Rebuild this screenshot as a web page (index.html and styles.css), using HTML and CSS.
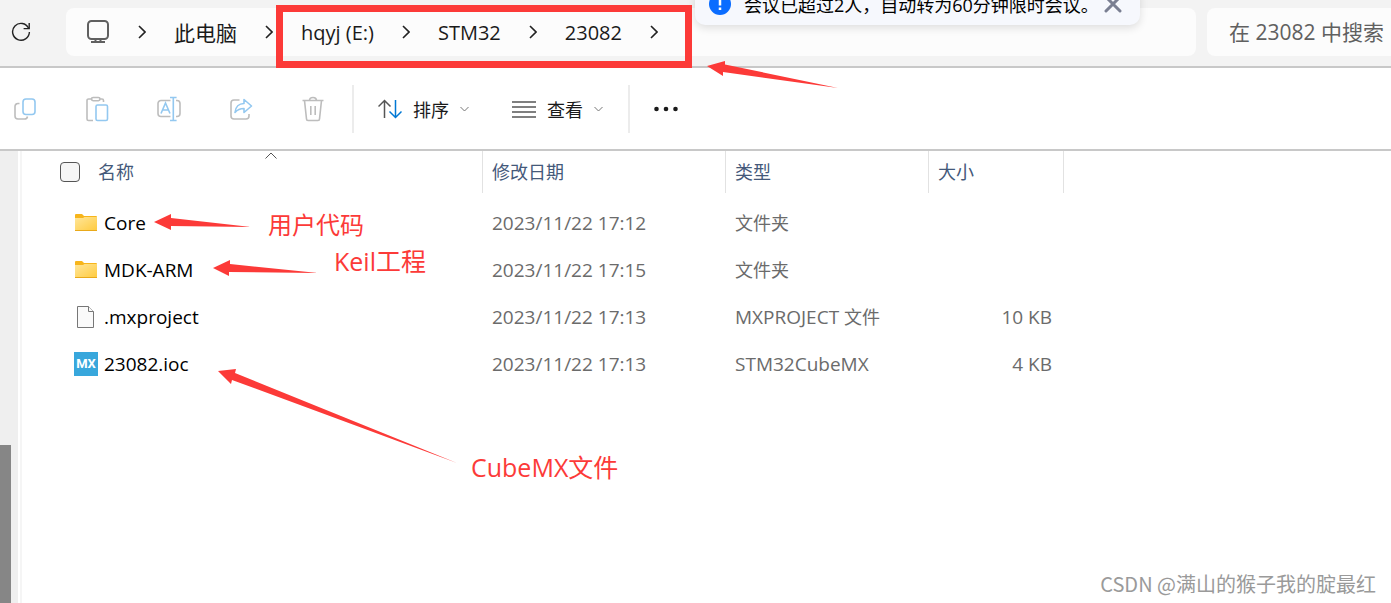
FILE: index.html
```html
<!DOCTYPE html>
<html lang="zh-CN">
<head>
  <meta charset="utf-8">
  <title>23082</title>
  <link rel="stylesheet" href="styles.css">
</head>
<body>
  <div class="topbar">
    <button class="icon-btn refresh" aria-label="刷新">
      <svg width="20" height="20" viewBox="0 0 20 20" fill="none" stroke="#222" stroke-width="1.4"><path d="M17.6 6.2A8.4 8.4 0 1 0 18.4 10"/><path d="M18.2 1v5.6h-5.6"/></svg>
    </button>
    <nav class="address">
      <svg width="24" height="24" viewBox="0 0 24 24" fill="none" stroke="#606060" stroke-width="2"><rect x="2" y="1" width="20" height="18" rx="3.5"/><path d="M5 22h14M9.500 19v3M14.500 19v3"/></svg>
      <svg class="chev" width="8" height="14" viewBox="0 0 8 14"><path d="M1 1l6 6-6 6"/></svg>
      <a class="pc" href="#">此电脑</a>
      <svg class="chev" width="8" height="14" viewBox="0 0 8 14"><path d="M1 1l6 6-6 6"/></svg>
      <a href="#">hqyj (E:)</a>
      <svg class="chev" width="8" height="14" viewBox="0 0 8 14"><path d="M1 1l6 6-6 6"/></svg>
      <a href="#">STM32</a>
      <svg class="chev" width="8" height="14" viewBox="0 0 8 14"><path d="M1 1l6 6-6 6"/></svg>
      <a href="#">23082</a>
      <svg class="chev" width="8" height="14" viewBox="0 0 8 14"><path d="M1 1l6 6-6 6"/></svg>
    </nav>
    <input class="search" type="text" placeholder="在 23082 中搜索" aria-label="搜索">
  </div>

  <div class="toolbar">
    <div class="tools">
      <button class="icon-btn" aria-label="复制">
        <svg width="24" height="24" viewBox="0 0 24 24" fill="none" stroke-width="1.6"><path stroke="#bdbdbd" d="M6.500 6.500H5a3 3 0 0 0-3 3V19a3 3 0 0 0 3 3h6.500a3 3 0 0 0 3-2.500"/><rect stroke="#93c8f0" x="10" y="2" width="12" height="15.500" rx="3"/></svg>
      </button>
      <button class="icon-btn" aria-label="粘贴">
        <svg width="24" height="26" viewBox="0 0 24 26" fill="none" stroke-width="1.6"><path stroke="#bdbdbd" d="M7 3H3.500a1.500 1.500 0 0 0-1.500 1.500V23a1.500 1.500 0 0 0 1.500 1.500H8M14.500 3H17a1.500 1.500 0 0 1 1.500 1.500V6"/><rect stroke="#bdbdbd" x="6.500" y="1.500" width="8.500" height="3.200" rx="1.600"/><rect stroke="#93c8f0" x="11" y="9" width="11.500" height="15.500" rx="1.500"/></svg>
      </button>
      <button class="icon-btn" aria-label="重命名">
        <svg width="24" height="26" viewBox="0 0 24 26" fill="none" stroke-width="1.6"><path stroke="#bdbdbd" d="M13.500 4.500H4a3 3 0 0 0-3 3v10a3 3 0 0 0 3 3h9.500M19 4.500h1a3 3 0 0 1 3 3v10a3 3 0 0 1-3 3h-1"/><path stroke="#93c8f0" d="M16.300 1.500v23M13 1.500h6.600M13 24.500h6.600M4 17.500L8.500 7l4.500 10.500M5.500 14h6"/></svg>
      </button>
      <button class="icon-btn" aria-label="共享">
        <svg width="24" height="24" viewBox="0 0 24 24" fill="none" stroke-width="1.6"><path stroke="#bdbdbd" d="M10.500 3H5a3 3 0 0 0-3 3v13a3 3 0 0 0 3 3h12a3 3 0 0 0 3-3v-2"/><path stroke="#93c8f0" stroke-linejoin="round" d="M15 2.500l7.500 6.500-7.500 6.500v-4c-4 0-6.500 1-9 4 .5-5.500 4-9 9-9z"/></svg>
      </button>
      <button class="icon-btn" aria-label="删除">
        <svg width="24" height="26" viewBox="0 0 24 26" fill="none" stroke="#bdbdbd" stroke-width="1.6"><path d="M1.500 4.500h21M3.500 4.500l2 18.500a1.500 1.500 0 0 0 1.500 1.500h10a1.500 1.500 0 0 0 1.500-1.500l2-18.500M8.500 4.500a3.500 3 0 0 1 7 0M9.800 10v9M14.200 10v9"/></svg>
      </button>
    </div>
    <div class="menus">
      <button class="menu-btn">
        <svg width="24" height="20" viewBox="0 0 24 20" fill="none" stroke-width="1.500"><path stroke="#555" d="M6.500 19V1.500M.5 7.500l6-6 6 6"/><path stroke="#0078d4" d="M17.500 1v17.500M11.500 12.500l6 6 6-6"/></svg>
        排序
        <svg width="9" height="6" viewBox="0 0 9 6" fill="none" stroke="#777"><path d="M.5 1l4 4 4-4"/></svg>
      </button>
      <button class="menu-btn">
        <svg width="24" height="18" viewBox="0 0 24 18" fill="none" stroke="#555" stroke-width="1.400"><path d="M0 2h24M0 7h24M0 12h24M0 17h24"/></svg>
        查看
        <svg width="9" height="6" viewBox="0 0 9 6" fill="none" stroke="#777"><path d="M.5 1l4 4 4-4"/></svg>
      </button>
    </div>
    <button class="icon-btn more" aria-label="更多">
      <svg width="24" height="6" viewBox="0 0 24 6" fill="#1a1a1a"><circle cx="2.500" cy="3" r="2.300"/><circle cx="12" cy="3" r="2.300"/><circle cx="21.500" cy="3" r="2.300"/></svg>
    </button>
  </div>

  <div class="main">
    <div class="side"><div class="thumb"></div></div>
    <div class="list">
      <table>
        <colgroup>
          <col class="c-name"><col class="c-date"><col class="c-type"><col class="c-size"><col>
        </colgroup>
        <thead>
          <tr>
            <th class="th-name">
              <svg class="caret" width="12" height="7" viewBox="0 0 12 7" fill="none" stroke="#555"><path d="M.5 6.500L6 1l5.500 5.500"/></svg>
              <label><input type="checkbox"><span>名称</span></label>
            </th>
            <th>修改日期</th>
            <th>类型</th>
            <th>大小</th>
            <td></td>
          </tr>
        </thead>
        <tbody>
          <tr>
            <td><div class="file">
              <svg width="24" height="24" viewBox="0 0 24 24"><path fill="#f7b51b" d="M1 4a1 1 0 0 1 1-1h6l2 2h12a1 1 0 0 1 1 1v3H1z"/><path fill="url(#fold)" d="M1 7h8l1.500-1H23v12.500a1 1 0 0 1-1 1H2a1 1 0 0 1-1-1z"/><path stroke="#e9a91a" d="M1 19.500h22"/><defs><linearGradient id="fold" x1="0" y1="0" x2="1" y2="1"><stop offset="0" stop-color="#ffe69a"/><stop offset="1" stop-color="#ffcb3f"/></linearGradient></defs></svg>
              Core</div></td>
            <td>2023/11/22 17:12</td>
            <td><span class="cjk">文件夹</span></td>
            <td></td>
            <td></td>
          </tr>
          <tr>
            <td><div class="file">
              <svg width="24" height="24" viewBox="0 0 24 24"><path fill="#f7b51b" d="M1 4a1 1 0 0 1 1-1h6l2 2h12a1 1 0 0 1 1 1v3H1z"/><path fill="url(#fold)" d="M1 7h8l1.500-1H23v12.500a1 1 0 0 1-1 1H2a1 1 0 0 1-1-1z"/><path stroke="#e9a91a" d="M1 19.500h22"/></svg>
              MDK-ARM</div></td>
            <td>2023/11/22 17:15</td>
            <td><span class="cjk">文件夹</span></td>
            <td></td>
            <td></td>
          </tr>
          <tr>
            <td><div class="file">
              <svg width="24" height="24" viewBox="0 0 24 24" fill="#fafafa" stroke="#777"><path d="M3.500 1.500h11l5 5v16h-16z"/><path d="M14.500 1.500v5h5"/></svg>
              .mxproject</div></td>
            <td>2023/11/22 17:13</td>
            <td>MXPROJECT <span class="cjk">文件</span></td>
            <td class="size">10 KB</td>
            <td></td>
          </tr>
          <tr>
            <td><div class="file"><span class="mx">MX</span>23082.ioc</div></td>
            <td>2023/11/22 17:13</td>
            <td>STM32CubeMX</td>
            <td class="size">4 KB</td>
            <td></td>
          </tr>
        </tbody>
      </table>
    </div>
  </div>

  <!-- meeting notice over the window -->
  <div class="toast">
    <svg width="22" height="22" viewBox="0 0 22 22"><circle cx="11" cy="11" r="11" fill="#0a6cff"/><path stroke="#fff" stroke-width="2.500" d="M11 4.500v8M11 14.500v2.500"/></svg>
    <span>会议已超过2人，自动转为60分钟限时会议。</span>
    <button class="close" aria-label="关闭">
      <svg width="18" height="18" viewBox="0 0 18 18" stroke="#7a7f92" stroke-width="3" stroke-linecap="round"><path d="M2 2l14 14M16 2L2 16"/></svg>
    </button>
  </div>

  <!-- red marks -->
  <div class="mark-box"></div>
  <svg class="arrows" width="860" height="480" viewBox="0 0 860 480" fill="#fc3a38">
    <path d="M707 66l18-5v3.500l113 23.500-115-16v4z"/>
    <path d="M154 222l17-8v4l80 9-80-1v4z"/>
    <path d="M213 268l17-8v4l88 9-89-1v4z"/>
    <path d="M218 371l18-2-1 4 222 90-225-83-1 4z"/>
  </svg>
  <div class="note note-core">用户代码</div>
  <div class="note note-keil">Keil工程</div>
  <div class="note note-ioc">CubeMX文件</div>
  <div class="watermark">CSDN @满山的猴子我的腚最红</div>
</body>
</html>
```
FILE: styles.css
```css
* {
  box-sizing: border-box;
}

body {
  margin: 0;
  height: 100vh;
  display: flex;
  flex-direction: column;
  position: relative;
  overflow: hidden;
  background: #fff;
  color: #1a1a1a;
  font-family: "Open Sans", "Noto Sans CJK SC", sans-serif;
  font-size: 19px;
}

button, input {
  font: inherit;
  color: inherit;
}

button {
  border: none;
  background: none;
  padding: 0;
  cursor: pointer;
}

svg {
  display: block;
  flex: none;
}

.icon-btn {
  display: flex;
  justify-content: center;
  align-items: center;
  width: 24px;
  height: 32px;
}

/* address row */
.topbar {
  display: flex;
  align-items: center;
  height: 68px;
  padding-bottom: 2px;
  background: #f3f3f3;
  border-bottom: 2px solid #c8c8c8;
}

.refresh {
  margin: 0 33px 0 9px;
}

.address {
  flex: 1;
  display: flex;
  align-items: center;
  gap: 28px;
  height: 48px;
  padding-left: 20px;
  background: #fcfcfc;
  border-radius: 8px;
  font-size: 20px;
}

.address a {
  color: #1a1a1a;
  text-decoration: none;
  white-space: nowrap;
}

.address .pc {
  font-size: 21px;
}

.chev {
  fill: none;
  stroke: #222;
  stroke-width: 1.6;
}

.search {
  width: 184px;
  height: 48px;
  margin-left: 11px;
  padding: 0 0 0 22px;
  border: none;
  border-radius: 8px 0 0 8px;
  background: #fcfcfc;
  font-size: 21px;
}

.search::placeholder {
  color: #606060;
}

/* command bar */
.toolbar {
  display: flex;
  align-items: center;
  height: 83px;
  border-bottom: 2px solid #c8c8c8;
}

.tools {
  display: flex;
  gap: 48px;
  padding: 0 27px 0 13px;
}

.menus {
  display: flex;
  align-items: center;
  gap: 43px;
  height: 48px;
  padding: 0 25px 0 24px;
  border-left: 2px solid #ececec;
  border-right: 2px solid #ececec;
}

.menu-btn {
  display: flex;
  align-items: center;
  gap: 11px;
  font-size: 18px;
}

.more {
  margin-left: 24px;
}

/* file list */
.main {
  flex: 1;
  display: flex;
}

.side {
  display: flex;
  flex-direction: column;
  justify-content: flex-end;
  width: 18px;
  background: #efefef;
}

.thumb {
  width: 11px;
  height: 35%;
  background: #868686;
}

.list {
  flex: 1;
  margin-left: 2px;
  padding-left: 38px;
  border-left: 2px solid #f5f5f5;
}

table {
  width: 100%;
  table-layout: fixed;
  border-collapse: separate;
  border-spacing: 0;
}

.c-name {
  width: 423px;
}

.c-date {
  width: 243px;
}

.c-type {
  width: 203px;
}

.c-size {
  width: 135px;
}

th, td {
  padding: 0 11px 0 9px;
  text-align: left;
  font-weight: normal;
  white-space: nowrap;
}

th {
  height: 42px;
  padding-bottom: 2px;
  border-right: 1px solid #e2e2e2;
  color: #44597a;
  font-size: 18px;
}

.th-name {
  position: relative;
  padding: 0;
}

.th-name label {
  display: flex;
  align-items: center;
  gap: 18px;
}

.th-name span {
  padding-bottom: 2px;
}

.th-name input {
  appearance: none;
  width: 20px;
  height: 20px;
  margin: 0;
  border: 1px solid #555;
  border-radius: 4px;
  background: #f5f5f5;
}

.caret {
  position: absolute;
  top: 1px;
  left: calc(50% - 6px);
}

tbody::before {
  content: "";
  display: block;
  height: 6px;
}

tbody td {
  height: 47px;
  color: #6b6b6b;
}

.cjk {
  font-size: 18px;
}

.size {
  text-align: right;
  padding-right: 12px;
}

.file {
  display: flex;
  align-items: center;
  gap: 6px;
  padding-left: 5px;
  color: #000;
}

.mx {
  width: 24px;
  height: 24px;
  background: #38a7dc;
  color: #fff;
  font: bold 13px/24px "Roboto", sans-serif;
  text-align: center;
}

/* notice */
.toast {
  position: absolute;
  top: -15px;
  left: 695px;
  display: flex;
  align-items: center;
  gap: 13px;
  height: 40px;
  padding: 0 18px 2px 14px;
  border-radius: 10px;
  background: #f6f8fd;
  box-shadow: 0 3px 8px rgba(0, 0, 0, 0.12);
  color: #000;
  font-size: 18px;
  white-space: nowrap;
}

.close {
  margin-left: -8px;
}

/* marks */
.mark-box {
  position: absolute;
  top: 5px;
  left: 276px;
  width: 416px;
  height: 63px;
  border: 7px solid #fc3a38;
}

.arrows {
  position: absolute;
  top: 0;
  left: 0;
  pointer-events: none;
}

.note {
  position: absolute;
  color: #fc3a38;
  font-size: 25px;
  line-height: 32px;
  white-space: nowrap;
}

.note-core {
  top: 209px;
  left: 268px;
  font-size: 24px;
}

.note-keil {
  top: 245px;
  left: 334px;
}

.note-ioc {
  top: 451px;
  left: 471px;
}

.watermark {
  position: absolute;
  right: 15px;
  bottom: 4px;
  color: #9a9a9a;
  font-family: "Noto Sans CJK SC", sans-serif;
  font-size: 20px;
  line-height: 30px;
}
```
